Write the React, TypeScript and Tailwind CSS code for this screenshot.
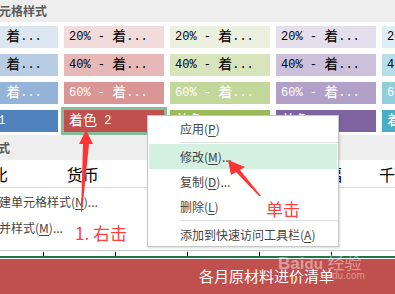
import React from 'react'

const cjk = '"Noto Sans CJK SC", sans-serif'
const mono = '"Liberation Mono", "Noto Sans CJK SC", monospace'

const columns = [
  { tints: ['#dce6f1', '#b8cce4', '#95b3d7', '#4f81bd'], label: '1' },
  { tints: ['#f2dcdb', '#e6b8b7', '#da9694', '#c0504d'], label: '2' },
  { tints: ['#ebf1de', '#d8e4bc', '#c4d79b', '#9bbb59'], label: '3' },
  { tints: ['#e4dfec', '#ccc0da', '#b1a0c7', '#8064a2'], label: '4' },
  { tints: ['#daeef3', '#b7dee8', '#92cddc', '#4bacc6'], label: '5' },
]

const percents = ['20%', '40%', '60%']

function Tile({ bg, light, selected, children }: { bg: string; light: boolean; selected?: boolean; children: React.ReactNode }) {
  return (
    <div
      className={`w-[100px] h-[22px] shrink-0 flex items-center pl-[5px] text-[12px] whitespace-nowrap overflow-hidden ${light ? 'text-white' : 'text-black'} ${selected ? 'shadow-[0_0_0_3px_#86bc9c]' : ''}`}
      style={{ backgroundColor: bg, fontFamily: mono }}
    >
      {children}
    </div>
  )
}

function Key({ k }: { k: string }) {
  return (
    <>
      (<span className="underline underline-offset-2">{k}</span>)
    </>
  )
}

function MenuItem({ children, active }: { children: React.ReactNode; active?: boolean }) {
  return (
    <div className={`h-[25px] flex items-center pl-[31px] mx-px ${active ? 'bg-[#d3f0e0]' : ''}`}>
      {children}
    </div>
  )
}

function Separator() {
  return (
    <div className="h-[3px] flex items-center pl-[32px]">
      <div className="h-px w-full bg-[#e1e1e1]" />
    </div>
  )
}

export default function App() {
  return (
    <div className="relative w-[395px] h-[294px] overflow-hidden bg-white" style={{ fontFamily: cjk }}>
      {/* style gallery panel */}
      <div className="flex flex-col border-b border-[#c8c8c8] h-[251px]">
        <div className="h-[22px] bg-[#eeeeee] flex items-center shrink-0">
          <span className="ml-[-37px] text-[12px] font-bold text-[#5a5a5a] whitespace-nowrap">主题单元格样式</span>
        </div>

        <div className="flex flex-col gap-[6px] pt-[4px] ml-[-42px]">
          {[0, 1, 2].map((r) => (
            <div key={r} className="flex gap-[6px]">
              {columns.map((c, i) => (
                <Tile key={i} bg={c.tints[r]} light={r === 2}>
                  {percents[r]}&nbsp;-&nbsp;<span className="text-[14px]">着</span>...
                </Tile>
              ))}
            </div>
          ))}
          <div className="flex gap-[6px]">
            {columns.map((c, i) => (
              <Tile key={i} bg={c.tints[3]} light selected={i === 1}>
                <span className="text-[14px]">着色</span>&nbsp;{c.label}
              </Tile>
            ))}
          </div>
        </div>

        <div className="h-[25px] mt-[3px] bg-[#eeeeee] flex items-center shrink-0">
          <span className="ml-[-38px] text-[12px] font-bold text-[#5a5a5a] whitespace-nowrap">数字格式</span>
        </div>

        <div className="h-[28px] flex items-center text-[16px] text-black border-b border-[#dadada] whitespace-nowrap shrink-0">
          <span className="ml-[-8px] w-[76px]">比</span>
          <span className="w-[263px]">货币</span>
          <span className="w-[54px]">幅</span>
          <span>千</span>
        </div>

        <div className="flex flex-col text-[12px] text-[#444] whitespace-nowrap pt-[1px]">
          <div className="h-[26px] flex items-center ml-[-13px]">
            新建单元格样式<Key k="N" />...
          </div>
          <div className="h-[26px] flex items-center ml-[-13px]">
            合并样式<Key k="M" />...
          </div>
        </div>
      </div>

      {/* sheet tabs strip */}
      <div className="h-[5px] flex items-end">
        <div className="flex ml-[43px] h-[4px]">
          {[0, 1, 2, 3, 4].map((i) => (
            <div key={i} className="w-[72px] border-l border-black" />
          ))}
        </div>
      </div>
      <div className="h-[2px] bg-[#217346]" />
      <div className="h-px bg-white" />
      <div className="h-[35px] bg-[#c0504d] flex items-center">
        <span className="ml-[199px] text-[15px] text-white whitespace-nowrap">各月原材料进价清单</span>
      </div>

      {/* watermark */}
      <div className="absolute left-[278px] top-[253px] text-[17px] font-bold text-white/45 whitespace-nowrap leading-none" style={{ fontFamily: '"Liberation Sans", sans-serif' }}>
        Bai<span className="text-[15px]">du</span> <span className="font-normal" style={{ fontFamily: cjk }}>经验</span>
      </div>
      <div className="absolute left-[332px] top-[271px] text-[10px] text-white/40 leading-none" style={{ fontFamily: '"Liberation Sans", sans-serif' }}>
        du.com
      </div>

      {/* context menu */}
      <div className="absolute left-[147px] top-[115px] w-[192px] h-[132px] bg-white border border-[#c6c6c6] shadow-[1px_1px_2px_rgba(0,0,0,0.15)] text-[12px] text-[#444] whitespace-nowrap">
        <MenuItem>
          应用<Key k="P" />
        </MenuItem>
        <Separator />
        <MenuItem active>
          修改<Key k="M" />...
        </MenuItem>
        <MenuItem>
          复制<Key k="D" />...
        </MenuItem>
        <MenuItem>
          删除<Key k="L" />
        </MenuItem>
        <Separator />
        <MenuItem>
          添加到快速访问工具栏<Key k="A" />
        </MenuItem>
      </div>

      {/* annotations */}
      <svg className="absolute left-0 top-0" width="395" height="294" viewBox="0 0 395 294">
        <polygon points="86,130 93,144 89,144 82,212 81,212 83,144 79,144" fill="#ff3333" />
        <polygon points="228,160 245,167 240,170 261,196 259,196 236,172 231,175" fill="#ff3333" />
      </svg>
      <div className="absolute left-[75px] top-[224px] text-[17px] text-[#ff4040] whitespace-nowrap leading-none">1. 右击</div>
      <div className="absolute left-[266px] top-[200px] text-[17px] text-[#ff4040] whitespace-nowrap leading-none">单击</div>
    </div>
  )
}
